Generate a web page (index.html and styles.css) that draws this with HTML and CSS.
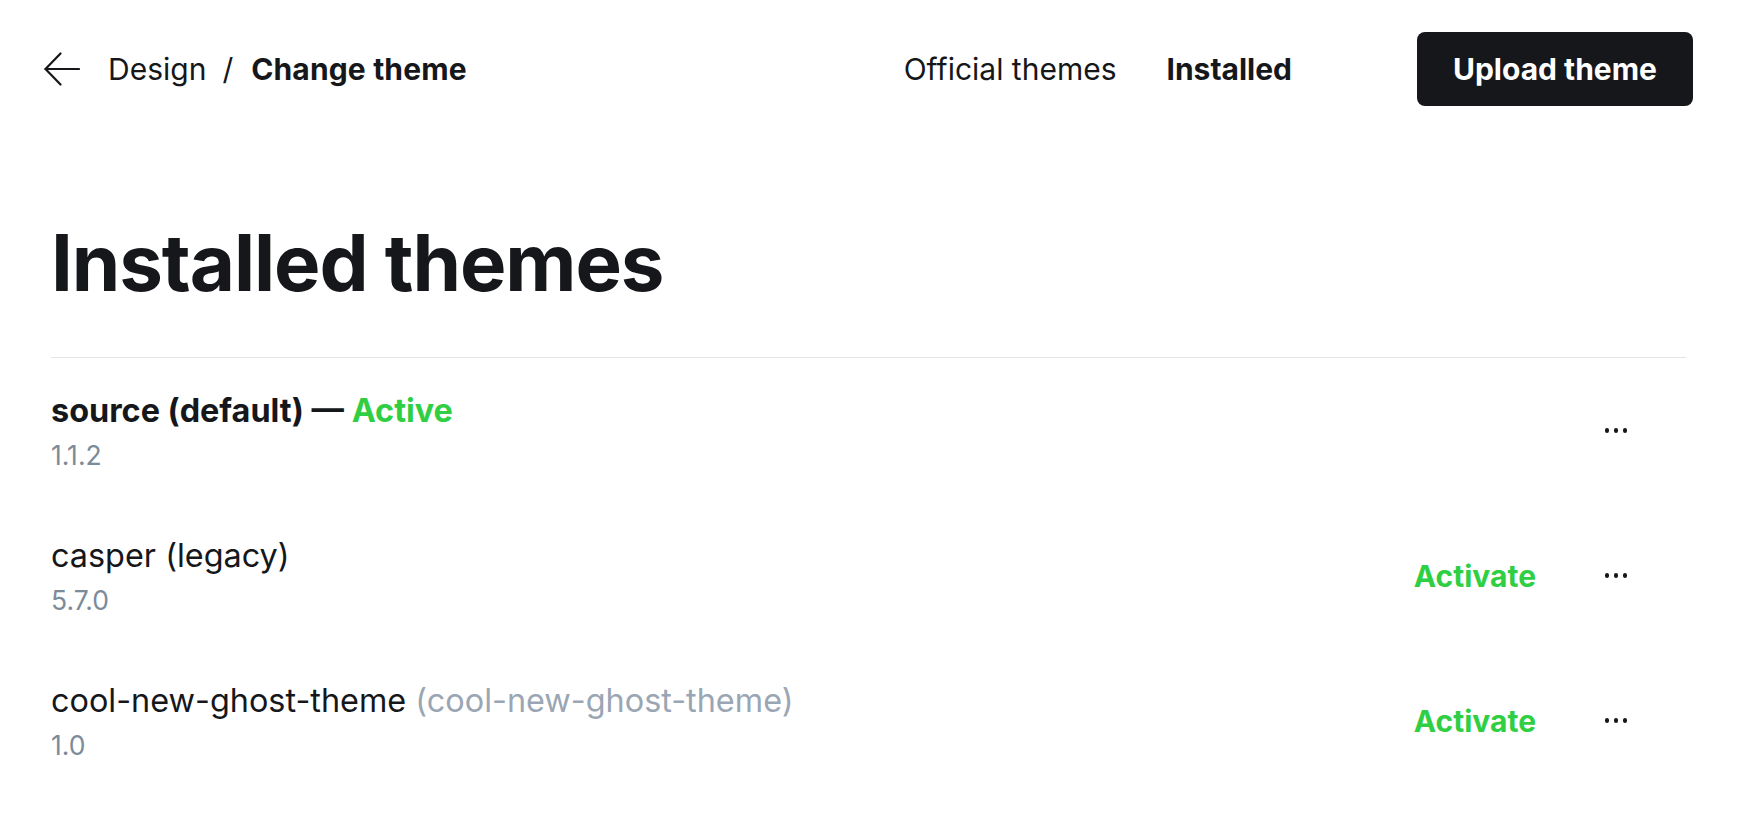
FILE: index.html
```html
<!DOCTYPE html>
<html lang="en">
<head>
<meta charset="utf-8">
<title>Change theme</title>
<link rel="stylesheet" href="styles.css">
</head>
<body>
<div class="page">
  <header class="topbar">
    <nav class="crumbs">
      <a class="back" href="#" aria-label="Back">
        <svg width="36" height="36" viewBox="0 0 36 36" fill="none" stroke="#15171a" stroke-width="2.2" stroke-linecap="round" stroke-linejoin="round"><path d="M1.5 18H35"/><path d="M16.5 2.5L1.5 18l15 15.5"/></svg>
      </a>
      <span class="crumb">Design</span>
      <span class="sep">/</span>
      <span class="crumb current">Change theme</span>
    </nav>
    <div class="right">
      <div class="tabs">
        <span class="tab">Official themes</span>
        <span class="tab active">Installed</span>
      </div>
      <button class="upload">Upload theme</button>
    </div>
  </header>

  <main class="content">
    <h1 class="title">Installed themes</h1>
    <ul class="list">
      <li class="row">
        <div class="info">
          <div class="name strong">source (default) — <span class="green">Active</span></div>
          <div class="version">1.1.2</div>
        </div>
        <div class="actions">
          <button class="menu" aria-label="Menu"><span></span><span></span><span></span></button>
        </div>
      </li>
      <li class="row">
        <div class="info">
          <div class="name">casper (legacy)</div>
          <div class="version">5.7.0</div>
        </div>
        <div class="actions">
          <button class="activate">Activate</button>
          <button class="menu" aria-label="Menu"><span></span><span></span><span></span></button>
        </div>
      </li>
      <li class="row">
        <div class="info">
          <div class="name">cool-new-ghost-theme <span class="muted">(cool-new-ghost-theme)</span></div>
          <div class="version">1.0</div>
        </div>
        <div class="actions">
          <button class="activate">Activate</button>
          <button class="menu" aria-label="Menu"><span></span><span></span><span></span></button>
        </div>
      </li>
    </ul>
  </main>
</div>
</body>
</html>
```

FILE: styles.css
```css
* { box-sizing: border-box; }
html, body { margin: 0; padding: 0; background: #fff; }
body {
  font-family: Inter, "Noto Sans", sans-serif;
  color: #15171a;
  -webkit-font-smoothing: antialiased;
}
button { font-family: inherit; cursor: pointer; }

.topbar {
  display: flex;
  align-items: center;
  justify-content: space-between;
  padding: 32px 51px 0 44px;
}
.crumbs {
  display: flex;
  align-items: center;
  font-size: 30px;
  line-height: 36px;
}
.back { display: flex; width: 36px; height: 36px; margin-right: 28px; }
.crumb { color: #15171a; }
.sep { margin: 0 18px 0 16px; }
.current { font-weight: 700; letter-spacing: 0.005em; }

.right { display: flex; align-items: center; }
.tabs { display: flex; gap: 50px; margin-right: 125px; font-size: 30px; line-height: 36px; }
.tab.active { font-weight: 700; }
.upload {
  height: 74px;
  width: 276px;
  border: 0;
  border-radius: 8px;
  background: #15171a;
  color: #fff;
  font-size: 30px;
  font-weight: 700;
  letter-spacing: 0;
}

.content { padding: 0 58px 0 51px; }
.title {
  margin: 114px 0 0;
  font-size: 78px;
  line-height: 86px;
  font-weight: 700;
  letter-spacing: -0.014em;
  padding-bottom: 51px;
  border-bottom: 1px solid #e2e5e9;
}
.list { list-style: none; margin: 0; padding: 0; }
.row {
  height: 145px;
  display: flex;
  align-items: center;
  justify-content: space-between;
}
.info { padding-top: 3px; }
.name { font-size: 32.4px; line-height: 46px; }
.name.strong { font-weight: 700; }
.green { color: #30cf43; }
.muted { color: #9aa6b3; }
.version { font-size: 26.5px; line-height: 42px; color: #7c8b9a; }

.actions { display: flex; align-items: center; }
.activate {
  border: 0;
  background: none;
  padding: 0;
  color: #30cf43;
  font-size: 30px;
  font-weight: 700;
}
.menu {
  width: 80px;
  height: 44px;
  margin-left: 40px;
  margin-right: 30px;
  border: 0;
  background: none;
  display: flex;
  align-items: center;
  justify-content: center;
  gap: 4.5px;
  padding: 0;
}
.menu span { width: 4.5px; height: 4.5px; border-radius: 50%; background: #15171a; }
```
